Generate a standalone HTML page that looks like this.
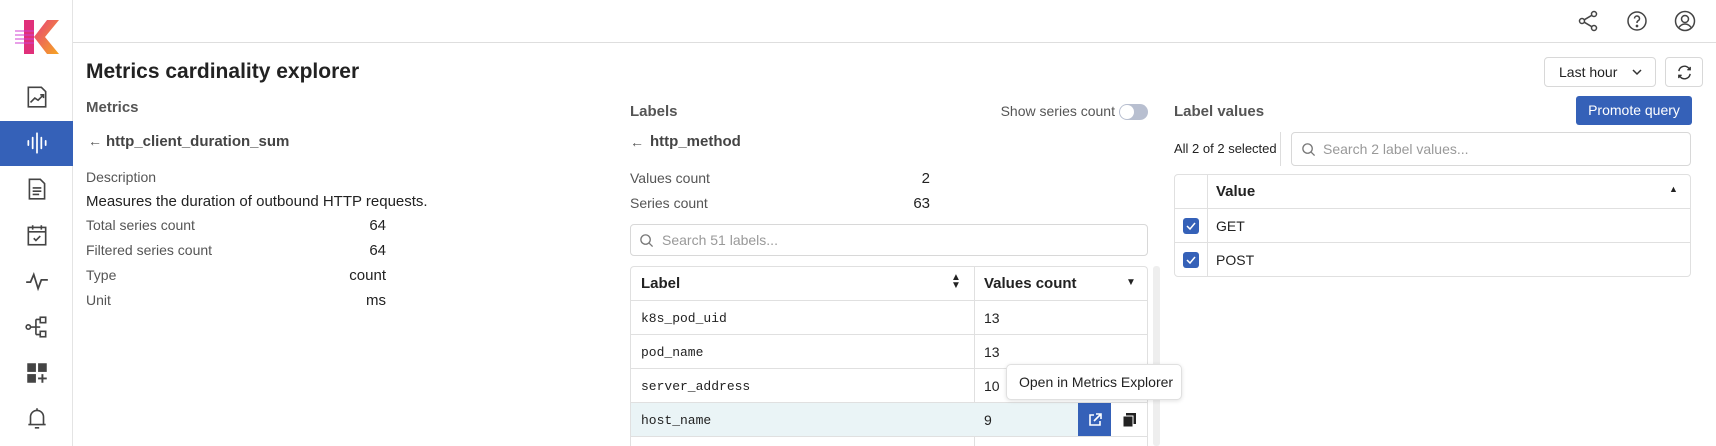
<!DOCTYPE html>
<html style="height:446px;overflow:hidden"><head><meta charset="utf-8"><style>
*{box-sizing:border-box;margin:0;padding:0}
body{width:1716px;height:446px;overflow:hidden;background:#fff;font-family:"Liberation Sans",sans-serif;color:#222;position:relative}
.abs{position:absolute}
.side{left:0;top:0;width:73px;height:446px;border-right:1px solid #e4e4e4}
.hdr{left:73px;top:0;right:0;height:43px;border-bottom:1px solid #dedede}
.ic{position:absolute;left:24px;width:26px;height:26px}
.lbl{font-size:14px;color:#555}
.sec{font-size:15px;font-weight:bold;color:#555}
.val{font-size:15px;color:#222;text-align:right}
.box{border:1px solid #d8d8d8;border-radius:4px}
.mono{font-family:"Liberation Mono",monospace;font-size:13px}
.row{position:absolute;left:0;right:0;height:34px;border-top:1px solid #e0e0e0}
</style></head><body>
<div class="abs side">
 <svg class="abs" style="left:14px;top:18px" width="46" height="38" viewBox="0 0 46 38">
  <defs><linearGradient id="g" x1="0" x2="1" y1="0" y2="1"><stop offset="0" stop-color="#e8407a"/><stop offset="1" stop-color="#f5a623"/></linearGradient></defs>
  <rect x="10" y="2" width="10" height="34" fill="#e0307a"/>
  <polygon points="20,19 33,2 45,2 31,19 45,36 33,36" fill="url(#g)"/>
  <path d="M1 13h19M1 17h19M1 21h19M1 25h19" stroke="#d040d0" stroke-width="1"/>
 </svg>
 <svg class="ic" style="top:84px" viewBox="0 0 24 24" fill="none" stroke="#444" stroke-width="1.5"><path d="M4 3h12l4 4v14H4z"/><path d="M6 17l4-4 3 2 5-5M15 10h3v3"/></svg>
 <div class="abs" style="left:0;top:121px;width:73px;height:45px;background:#3561b8"></div>
 <svg class="ic" style="top:130px" viewBox="0 0 24 24" fill="none" stroke="#fff" stroke-width="1.6" stroke-linecap="round"><path d="M4 10v4M8 7v10M12 3v18M16 7v10M20 10v4"/></svg>
 <svg class="ic" style="top:176px" viewBox="0 0 24 24" fill="none" stroke="#444" stroke-width="1.5"><path d="M5 3h10l4 4v14H5z M8 11h8M8 14h8M8 17h6"/></svg>
 <svg class="ic" style="top:222px" viewBox="0 0 24 24" fill="none" stroke="#444" stroke-width="1.5"><rect x="4" y="5" width="16" height="16"/><path d="M4 9h16M8 3v4M16 3v4M9 15l2 2 4-4"/></svg>
 <svg class="ic" style="top:268px" viewBox="0 0 24 24" fill="none" stroke="#444" stroke-width="1.6"><path d="M2 13h4l3-7 4 13 3-8h6"/></svg>
 <svg class="ic" style="top:314px" viewBox="0 0 24 24" fill="none" stroke="#444" stroke-width="1.5"><circle cx="4" cy="12" r="2"/><rect x="15" y="3" width="5" height="5"/><rect x="15" y="16" width="5" height="5"/><path d="M6 12h5M11 5v14M11 5h4M11 19h4M11 12h4"/></svg>
 <svg class="ic" style="top:360px" viewBox="0 0 24 24"><rect x="3" y="3" width="8" height="8" fill="#444"/><rect x="13" y="3" width="8" height="8" fill="#444"/><rect x="3" y="13" width="8" height="8" fill="#444"/><path d="M17 13v8M13 17h8" stroke="#444" stroke-width="1.8"/></svg>
 <svg class="ic" style="top:405px" viewBox="0 0 24 24" fill="none" stroke="#444" stroke-width="1.5"><path d="M6 18V11a6 6 0 0 1 12 0v7zM4 18h16M10 21h4M12 3v2"/></svg>
</div>
<div class="abs hdr"></div>
<svg class="abs" style="left:1576px;top:9px" width="24" height="24" viewBox="0 0 24 24" fill="none" stroke="#444" stroke-width="1.5"><circle cx="18" cy="5" r="2.5"/><circle cx="6" cy="12" r="2.5"/><circle cx="18" cy="19" r="2.5"/><path d="M8.2 10.8l7.6-4.5M8.2 13.2l7.6 4.5"/></svg>
<svg class="abs" style="left:1625px;top:9px" width="24" height="24" viewBox="0 0 24 24" fill="none" stroke="#444" stroke-width="1.5"><circle cx="12" cy="12" r="9"/><path d="M9.5 9.5a2.5 2.5 0 1 1 3.5 2.3c-.7.4-1 .9-1 1.7v.5"/><circle cx="12" cy="17" r=".6" fill="#444"/></svg>
<svg class="abs" style="left:1673px;top:9px" width="24" height="24" viewBox="0 0 24 24" fill="none" stroke="#444" stroke-width="1.5"><circle cx="12" cy="12" r="9.5"/><circle cx="12" cy="10" r="3.5"/><path d="M5.5 19c2-3 4-4 6.5-4s4.5 1 6.5 4"/></svg>

<div class="abs" style="left:86px;top:60px;font-size:21px;font-weight:bold;color:#222">Metrics cardinality explorer</div>
<div class="abs box" style="left:1544px;top:57px;width:112px;height:30px;font-size:14px;padding:6px 14px">Last hour<svg class="abs" style="right:12px;top:10px" width="12" height="8" viewBox="0 0 12 8" fill="none" stroke="#333" stroke-width="1.5"><path d="M2 2l4 4 4-4"/></svg></div>
<div class="abs box" style="left:1665px;top:57px;width:38px;height:30px"><svg class="abs" style="left:10px;top:6px" width="17" height="17" viewBox="0 0 24 24" fill="none" stroke="#333" stroke-width="2"><path d="M4 10a8 8 0 0 1 14-4l2 2M20 4v4h-4M20 14a8 8 0 0 1-14 4l-2-2M4 20v-4h4"/></svg></div>

<div class="abs sec" style="left:86px;top:99px">Metrics</div>
<div class="abs" style="left:88px;top:133px;font-size:14px;color:#555">&#8592;</div>
<div class="abs" style="left:106px;top:133px;font-size:15px;font-weight:bold;color:#444">http_client_duration_sum</div>
<div class="abs lbl" style="left:86px;top:169px">Description</div>
<div class="abs" style="left:86px;top:193px;font-size:15px">Measures the duration of outbound HTTP requests.</div>
<div class="abs lbl" style="left:86px;top:217px">Total series count</div><div class="abs val" style="left:300px;width:86px;top:217px">64</div>
<div class="abs lbl" style="left:86px;top:242px">Filtered series count</div><div class="abs val" style="left:300px;width:86px;top:242px">64</div>
<div class="abs lbl" style="left:86px;top:267px">Type</div><div class="abs val" style="left:300px;width:86px;top:267px">count</div>
<div class="abs lbl" style="left:86px;top:292px">Unit</div><div class="abs val" style="left:300px;width:86px;top:292px">ms</div>

<div class="abs sec" style="left:630px;top:103px">Labels</div>
<div class="abs lbl" style="left:1000px;top:103px;width:115px;text-align:right">Show series count</div>
<div class="abs" style="left:1119px;top:104px;width:29px;height:16px;border-radius:8px;background:#b8bfd0"><div class="abs" style="left:1px;top:1px;width:14px;height:14px;border-radius:7px;background:#fff"></div></div>
<div class="abs" style="left:630px;top:134px;font-size:14px;color:#555">&#8592;</div>
<div class="abs" style="left:650px;top:133px;font-size:15px;font-weight:bold;color:#444">http_method</div>
<div class="abs lbl" style="left:630px;top:170px">Values count</div><div class="abs val" style="left:860px;width:70px;top:170px">2</div>
<div class="abs lbl" style="left:630px;top:195px">Series count</div><div class="abs val" style="left:860px;width:70px;top:195px">63</div>
<div class="abs box" style="left:630px;top:224px;width:518px;height:32px"><svg class="abs" style="left:8px;top:8px" width="15" height="15" viewBox="0 0 16 16" fill="none" stroke="#777" stroke-width="1.4"><circle cx="7" cy="7" r="5"/><path d="M11 11l3.5 3.5"/></svg><span class="abs" style="left:31px;top:7px;font-size:14px;color:#999">Search 51 labels...</span></div>
<div class="abs" style="left:1153px;top:266px;width:7px;height:180px;background:#eee;border-radius:3px"></div>
<div class="abs" style="left:630px;top:266px;width:518px;height:180px;border:1px solid #e0e0e0;border-bottom:none;border-radius:4px 4px 0 0;overflow:hidden">
 <div class="abs" style="left:343px;top:0;width:1px;height:200px;background:#e0e0e0"></div>
 <div class="abs" style="left:10px;top:8px;font-size:15px;font-weight:bold">Label</div>
 <div class="abs" style="left:320px;top:7px;font-size:10px;line-height:8px">&#9650;<br>&#9660;</div>
 <div class="abs" style="left:353px;top:8px;font-size:15px;font-weight:bold">Values count</div>
 <div class="abs" style="left:495px;top:10px;font-size:10px">&#9660;</div>
 <div class="row" style="top:33px"><span class="abs mono" style="left:10px;top:10px">k8s_pod_uid</span><span class="abs" style="left:353px;top:9px;font-size:14px">13</span></div>
 <div class="row" style="top:67px"><span class="abs mono" style="left:10px;top:10px">pod_name</span><span class="abs" style="left:353px;top:9px;font-size:14px">13</span></div>
 <div class="row" style="top:101px"><span class="abs mono" style="left:10px;top:10px">server_address</span><span class="abs" style="left:353px;top:9px;font-size:14px">10</span></div>
 <div class="row" style="top:135px;background:#eaf4f6"><span class="abs mono" style="left:10px;top:10px">host_name</span><span class="abs" style="left:353px;top:9px;font-size:14px">9</span>
  <div class="abs" style="left:447px;top:0;width:71px;height:34px;background:#fff"></div>
  <div class="abs" style="left:447px;top:0;width:33px;height:34px;background:#3561b8"><svg class="abs" style="left:9px;top:9px" width="16" height="16" viewBox="0 0 16 16" fill="none" stroke="#fff" stroke-width="1.6"><path d="M7 3H3v10h10V9M9 2h5v5M14 2L7 9"/></svg></div>
  <svg class="abs" style="left:491px;top:9px" width="15" height="16" viewBox="0 0 15 16"><rect x="4" y="1" width="10" height="11" fill="#222"/><rect x="1" y="4" width="10" height="11" fill="#222" stroke="#fff" stroke-width="1"/></svg>
 </div>
 <div class="row" style="top:169px"></div>
</div>
<div class="abs" style="left:1006px;top:364px;width:176px;height:36px;background:#fff;border:1px solid #e0e0e0;border-radius:5px;box-shadow:0 1px 4px rgba(0,0,0,.12);font-size:14px;padding:9px 12px;white-space:nowrap">Open in Metrics Explorer</div>

<div class="abs sec" style="left:1174px;top:103px">Label values</div>
<div class="abs" style="left:1576px;top:96px;width:116px;height:29px;background:#3561b8;border-radius:3px;color:#fff;font-size:14px;text-align:center;line-height:29px">Promote query</div>
<div class="abs" style="left:1174px;top:141px;font-size:13px">All 2 of 2 selected</div>
<div class="abs" style="left:1280px;top:132px;width:1px;height:34px;background:#ddd"></div>
<div class="abs box" style="left:1291px;top:132px;width:400px;height:34px"><svg class="abs" style="left:9px;top:9px" width="15" height="15" viewBox="0 0 16 16" fill="none" stroke="#777" stroke-width="1.4"><circle cx="7" cy="7" r="5"/><path d="M11 11l3.5 3.5"/></svg><span class="abs" style="left:31px;top:8px;font-size:14px;color:#999">Search 2 label values...</span></div>
<div class="abs" style="left:1174px;top:174px;width:517px;height:103px;border:1px solid #e0e0e0;border-radius:4px">
 <div class="abs" style="left:32px;top:0;width:1px;height:101px;background:#e0e0e0"></div>
 <div class="abs" style="left:41px;top:8px;font-size:15px;font-weight:bold">Value</div>
 <div class="abs" style="left:494px;top:9px;font-size:9px">&#9650;</div>
 <div class="row" style="top:33px"><div class="abs" style="left:8px;top:9px;width:16px;height:16px;border-radius:3px;background:#3561b8"><svg width="16" height="16" viewBox="0 0 16 16" fill="none" stroke="#fff" stroke-width="1.5"><path d="M4 8l3 3 5-6"/></svg></div><span class="abs" style="left:41px;top:9px;font-size:14px">GET</span></div>
 <div class="row" style="top:67px"><div class="abs" style="left:8px;top:9px;width:16px;height:16px;border-radius:3px;background:#3561b8"><svg width="16" height="16" viewBox="0 0 16 16" fill="none" stroke="#fff" stroke-width="1.5"><path d="M4 8l3 3 5-6"/></svg></div><span class="abs" style="left:41px;top:9px;font-size:14px">POST</span></div>
</div>
</body></html>
